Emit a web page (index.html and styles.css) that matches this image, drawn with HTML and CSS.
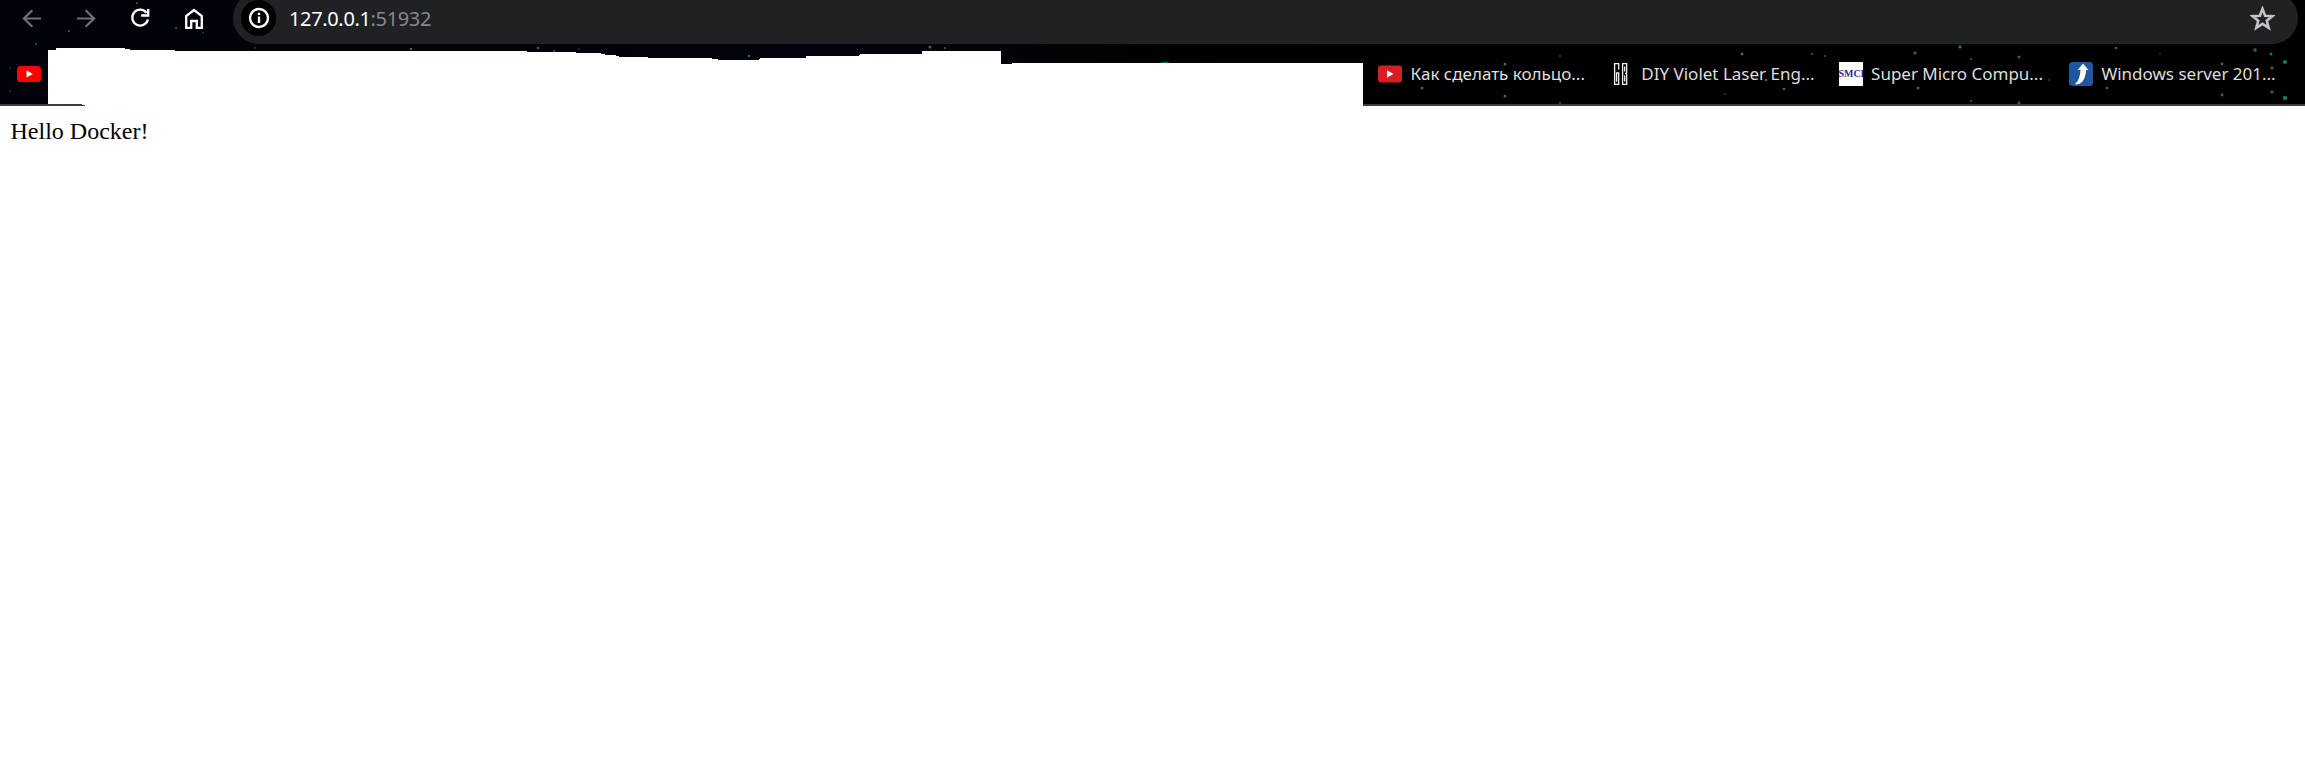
FILE: index.html
```html
<!DOCTYPE html>
<html lang="en">
<head>
<meta charset="utf-8">
<title>127.0.0.1:51932</title>
<link rel="stylesheet" href="styles.css">
</head>
<body>
<header class="chrome">
  <svg class="sky" width="2305" height="104" aria-hidden="true">
    <g fill="#4e5a60">
      <circle cx="69" cy="31" r="1"/><circle cx="36" cy="44" r="1"/><circle cx="10" cy="68" r="1" opacity=".5"/><circle cx="10" cy="91" r="1" opacity=".5"/><circle cx="137" cy="3" r="1"/><circle cx="176" cy="28" r="1"/><circle cx="203" cy="33" r="1" opacity=".6"/><circle cx="411" cy="49" r="1.3"/><circle cx="255" cy="48" r="1" opacity=".6"/>
      <circle cx="538" cy="48" r="1.3"/><circle cx="554" cy="51" r="1"/><circle cx="579" cy="49" r="1" opacity=".5"/><circle cx="749" cy="56" r="1.3"/><circle cx="930" cy="47" r="1.5"/><circle cx="945" cy="48" r="1"/>
      <circle cx="1505" cy="64" r="1.5"/><circle cx="1422" cy="88" r="1.5"/><circle cx="1505" cy="96" r="1.5"/><circle cx="1560" cy="56" r="1"/><circle cx="1560" cy="103" r="1"/><circle cx="1742" cy="54" r="1.5"/><circle cx="1812" cy="54" r="1"/><circle cx="1825" cy="56" r="1"/><circle cx="1766" cy="80" r="1.3"/><circle cx="1784" cy="89" r="1.3"/><circle cx="1725" cy="94" r="1" opacity=".6"/>
      <circle cx="1915" cy="53" r="1.5"/><circle cx="2019" cy="57" r="1.5"/><circle cx="1918" cy="88" r="1.5"/><circle cx="1971" cy="59" r="1"/><circle cx="1971" cy="101" r="1"/><circle cx="2019" cy="103" r="1.4"/><circle cx="2049" cy="80" r="1" opacity=".7"/><circle cx="2116" cy="48" r="1.3"/><circle cx="2160" cy="54" r="1" opacity=".6"/><circle cx="2107" cy="88" r="1.3"/><circle cx="2222" cy="64" r="1.4"/><circle cx="2222" cy="95" r="1.4"/>
    </g>
    <g fill="#14795a">
      <ellipse cx="1165" cy="63" rx="4" ry="1.300" fill="#087b22"/><circle cx="1960" cy="47" r="1.700"/><circle cx="2255" cy="50" r="1.800"/><circle cx="2271" cy="54" r="1.500"/><circle cx="2285" cy="62" r="2.100"/><circle cx="2272" cy="68" r="1.500"/><circle cx="2272" cy="92" r="1.600"/><circle cx="2285" cy="98" r="2.200"/>
    </g>
  </svg>

  <nav class="toolbar">
    <div class="buttons">
      <svg class="icon dim" viewBox="0 0 24 24"><path d="M21 12.500H4.200M12.300 4.200 4 12.500l8.300 8.300"/></svg>
      <svg class="icon dim" viewBox="0 0 24 24"><path d="M3 12.500h16.800M11.700 4.200 20 12.500l-8.300 8.300"/></svg>
      <svg class="icon" viewBox="0 0 24 24"><path d="M18.500 6.800A7.900 7.900 0 1 0 19.900 13.500M20.200 3v6.500h-7"/></svg>
      <svg class="icon" viewBox="0 0 24 24"><path d="M4.200 21.800V10L12 4l7.800 6v11.800h-5V15H9.200v6.800z"/></svg>
    </div>
    <div class="address">
      <span class="site-info"><svg width="22" height="22" viewBox="0 0 22 22"><circle cx="11" cy="11" r="9" fill="none" stroke="#fff" stroke-width="2.400"/><path d="M11 9.500V16M11 5.800v2.200" stroke="#fff" stroke-width="2.400"/></svg></span>
      <span class="url">127.0.0.1<span class="port">:51932</span></span>
      <svg class="star" viewBox="0 0 24 24"><path d="m12 2.800 2.500 6.600 7.100.3-5.500 4.500 1.850 6.800L12 17.200l-5.950 3.800L7.900 14.200 2.400 9.700l7.100-.3z"/></svg>
    </div>
  </nav>

  <nav class="bookmarks">
    <svg class="favicon" viewBox="0 0 24 24"><rect y="4" width="24" height="16" rx="3.500" fill="#f00"/><path d="M9.500 8.300v7.200l6.300-3.600z" fill="#fff"/></svg>
    <div class="saved">
      <a class="bookmark"><svg class="favicon" viewBox="0 0 24 24"><rect y="3.500" width="24" height="17" rx="3" fill="#d51f25"/><path d="M9 8.300v7.200l6.500-3.600z" fill="#fff"/></svg><span class="label">Как сделать кольцо...</span></a>
      <a class="bookmark"><svg class="favicon" viewBox="0 0 24 24"><g fill="none" stroke="#f2f2f2" stroke-width="1.300"><path d="M10.700 7.500V1.600H6.600v20.800h4.100V10.800H8.600v9M14.600 1.600h4.100v8.900l-.9 1 .9 1v9.900h-4.100zM16.700 4.500v5M16.700 13.500v6"/></g></svg><span class="label diy">DIY Violet Laser Eng...</span></a>
      <a class="bookmark"><svg class="favicon" viewBox="0 0 24 24"><path fill="#fff" d="M0 0h24v24H0z"/><text class="smci" x="-.5" y="15" textLength="26" lengthAdjust="spacingAndGlyphs">SMCI</text></svg><span class="label micro">Super Micro Compu...</span></a>
      <a class="bookmark"><svg class="favicon" viewBox="0 0 24 24"><rect width="24" height="24" rx="3.500" fill="#20569b"/><path d="m14 1.500 5.500 6.500h-2.300c-.7 7.500-3.200 13.500-8.700 14.200H5.300c4.200-2.200 5.700-7.700 6.200-14.200H8.700z" fill="#fff"/></svg><span class="label">Windows server 201...</span></a>
    </div>
  </nav>
  <div class="blank"></div>
</header>
<main class="page">Hello Docker!</main>
</body>
</html>
```

FILE: styles.css
```css
* { box-sizing: border-box; }
body { margin: 0; background: #fff; overflow: hidden; }
.chrome {
  position: relative;
  display: flow-root;
  height: 106px;
  overflow: hidden;
  background: linear-gradient(90deg, #01030a 0, #01040c 850px, #010409 1000px, #000101 1150px, #000 1400px);
  font-family: "Noto Sans", "Open Sans", sans-serif;
}
.sky { position: absolute; inset: 0; }
.toolbar {
  position: relative;
  display: flex;
  height: 52px;
  margin-top: -8px;
  padding-right: 7px;
}
.buttons { display: flex; align-items: center; gap: 30px; width: 233px; padding-left: 20px; }
.icon { width: 24px; height: 24px; fill: none; stroke: #fff; stroke-width: 2.3; flex: none; }
.dim { stroke: #707173; stroke-width: 2.2; }
.address {
  display: flex;
  align-items: center;
  flex: 1;
  padding: 0 23px 0 8px;
  border-radius: 26px;
  background: #202124;
}
.site-info { display: flex; align-items: center; justify-content: center; width: 35px; height: 36px; border-radius: 18px; background: #000; }
.url { flex: 1; margin-left: 13px; padding-top: 1px; color: #fff; font-size: 20px; letter-spacing: -.35px; line-height: 28px; }
.port { color: #87888b; }
.star { width: 25px; height: 25px; fill: none; stroke: #c4c4c4; stroke-width: 2.5; }
.bookmarks {
  position: relative;
  display: flex;
  align-items: center;
  height: 62px;
  padding-left: 17px;
  border-bottom: 2px solid #3c3b3d;
}
.favicon { width: 24px; height: 24px; flex: none; overflow: hidden; }
.saved { display: flex; margin-left: 1337px; }
.bookmark { display: flex; align-items: center; width: 230.300px; }
.label { margin-left: 8.500px; color: #dedede; font-size: 17px; line-height: 24px; white-space: nowrap; }
.diy { margin-left: 9px; }
.micro { letter-spacing: -.02px; }
.smci { fill: #302596; font: bold 11px "Liberation Serif", serif; }
.blank {
  position: absolute;
  inset: 0;
  background: #fff;
  clip-path: polygon(48px 50px, 56px 50px, 56px 48px, 125px 48px, 125px 49px, 130px 49px, 130px 50px, 175px 50px, 175px 51px, 527px 51px, 527px 52px, 576px 52px, 576px 53px, 601px 53px, 601px 54px, 605px 54px, 605px 55px, 616px 55px, 616px 56px, 619px 56px, 619px 57px, 648px 57px, 648px 58px, 712px 58px, 712px 59px, 718px 59px, 718px 60px, 759px 60px, 759px 59px, 760px 59px, 760px 58px, 806px 58px, 806px 56px, 859px 56px, 859px 55px, 860px 55px, 860px 54px, 922px 54px, 922px 51px, 1001px 51px, 1001px 64px, 1012px 64px, 1012px 63px, 1363px 63px, 1363px 106px, 85px 106px, 85px 105px, 82px 105px, 82px 104px, 48px 104px);
}
.page { padding: 11px 10.500px; color: #000; font: 24px/28px "Liberation Serif", "Times New Roman", serif; }
```
